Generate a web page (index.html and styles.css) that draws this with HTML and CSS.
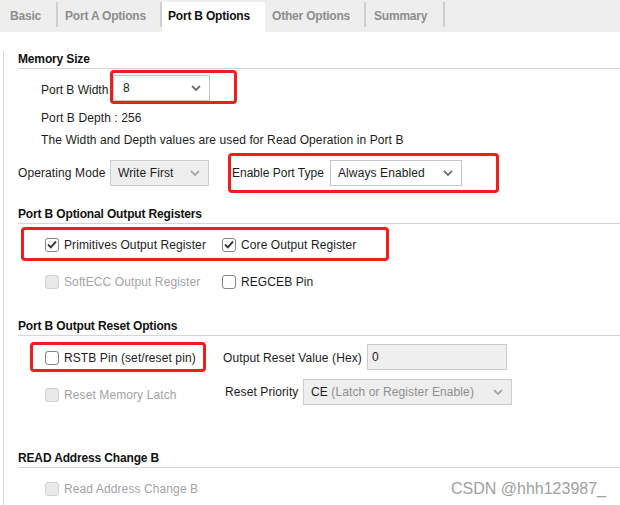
FILE: index.html
```html
<!DOCTYPE html>
<html>
<head>
<meta charset="utf-8">
<link rel="stylesheet" href="styles.css">
</head>
<body>
<div class="tabs">
  <div class="tab tab-basic">Basic</div>
  <div class="tab tab-a">Port A Options</div>
  <div class="tab tab-b active">Port B Options</div>
  <div class="tab tab-other">Other Options</div>
  <div class="tab tab-summary">Summary</div>
</div>
<div class="panel">
  <div class="heading h1">Memory Size</div>
  <div class="row row-width">
    <span class="label label-width">Port B Width</span>
    <div class="mark mark-width">
      <div class="select sel-width"><span>8</span><svg class="chev" width="10" height="6" viewBox="0 0 10 6"><path d="M1 1 L5 5 L9 1" fill="none" stroke="currentColor" stroke-width="1.8"/></svg></div>
    </div>
  </div>
  <div class="line indent depth">Port B Depth : 256</div>
  <div class="line indent note">The Width and Depth values are used for Read Operation in Port B</div>
  <div class="row row-op">
    <span class="label label-op">Operating Mode</span>
    <div class="select disabled sel-op"><span>Write First</span><svg class="chev" width="10" height="6" viewBox="0 0 10 6"><path d="M1 1 L5 5 L9 1" fill="none" stroke="currentColor" stroke-width="1.8"/></svg></div>
    <div class="mark mark-enable">
      <span class="label label-enable">Enable Port Type</span>
      <div class="select sel-enable"><span>Always Enabled</span><svg class="chev" width="10" height="6" viewBox="0 0 10 6"><path d="M1 1 L5 5 L9 1" fill="none" stroke="currentColor" stroke-width="1.8"/></svg></div>
    </div>
  </div>

  <div class="heading h2">Port B Optional Output Registers</div>
  <div class="mark mark-regs">
    <label class="check col1"><span class="box checked"><svg width="10" height="9" viewBox="0 0 10 9"><path d="M1 4.5 L3.8 7.3 L9 1.5" fill="none" stroke="currentColor" stroke-width="1.9"/></svg></span>Primitives Output Register</label>
    <label class="check"><span class="box checked"><svg width="10" height="9" viewBox="0 0 10 9"><path d="M1 4.5 L3.8 7.3 L9 1.5" fill="none" stroke="currentColor" stroke-width="1.9"/></svg></span>Core Output Register</label>
  </div>
  <div class="row row-ecc">
    <label class="check col1 off"><span class="box"></span>SoftECC Output Register</label>
    <label class="check"><span class="box"></span>REGCEB Pin</label>
  </div>

  <div class="heading h3">Port B Output Reset Options</div>
  <div class="row row-rstb">
    <div class="mark mark-rstb">
      <label class="check"><span class="box"></span>RSTB Pin (set/reset pin)</label>
    </div>
    <span class="label label-reset">Output Reset Value (Hex)</span>
    <div class="input">0</div>
  </div>
  <div class="row row-prio">
    <label class="check col-prio off"><span class="box"></span>Reset Memory Latch</label>
    <span class="label label-prio">Reset Priority</span>
    <div class="select disabled sel-prio"><span>CE <span class="muted">(Latch or Register Enable)</span></span><svg class="chev" width="10" height="6" viewBox="0 0 10 6"><path d="M1 1 L5 5 L9 1" fill="none" stroke="currentColor" stroke-width="1.8"/></svg></div>
  </div>

  <div class="heading h4">READ Address Change B</div>
  <div class="row row-read">
    <label class="check off"><span class="box"></span>Read Address Change B</label>
  </div>
</div>
<div class="watermark">CSDN @hhh123987_</div>
</body>
</html>
```
FILE: styles.css
```css
* { box-sizing: border-box; }
html, body { margin: 0; padding: 0; background: #fff; }
body {
  width: 620px;
  height: 505px;
  overflow: hidden;
  position: relative;
  font-family: "Liberation Sans", Arial, sans-serif;
  font-size: 12px;
  letter-spacing: 0.1px;
  color: #1c1c1c;
}

.tabs {
  display: flex;
  align-items: flex-start;
  height: 32px;
  padding-top: 2px;
  background: #eeeeee;
}
.tab {
  height: 25px;
  padding-top: 3px;
  line-height: 22px;
  padding-left: 7px;
  font-weight: bold;
  letter-spacing: -0.2px;
  color: #8d8d8d;
  border-right: 2px solid #cfcfcf;
  white-space: nowrap;
}
.tab-basic { width: 58px; padding-left: 10px; }
.tab-a { width: 104px; }
.tab-b { width: 103px; padding-left: 6px; }
.tab-other { width: 101px; }
.tab-summary { width: 79px; padding-left: 8px; }
.tab.active {
  height: 30px;
  background: #fff;
  color: #111;
  border-right: 0;
}

.panel {
  margin-left: 3px;
  border-left: 1px solid #dadada;
  padding-left: 14px;
  height: 473px;
}

.heading {
  font-weight: bold;
  letter-spacing: -0.15px;
  color: #111;
  line-height: 16px;
  padding-bottom: 1px;
  border-bottom: 1px solid #d4d4d4;
}
.h1 { margin-top: 19px; }
.h2 { margin-top: 13px; }
.h3 { margin-top: 26px; }
.h4 { margin-top: 45px; }

.row { display: flex; align-items: center; }
.label { white-space: nowrap; }
.line { line-height: 16px; white-space: nowrap; }
.indent { padding-left: 23px; }
.depth { margin-top: 6px; }
.note { margin-top: 6px; }

.mark {
  border: 3px solid #f01d1d;
  border-radius: 4px;
  display: flex;
  align-items: center;
}

.row-width { margin-top: 1px; padding-left: 23px; }
.label-width { width: 69px; padding-top: 6px; letter-spacing: 0; }
.mark-width { padding: 2px 24px 0 0; height: 34px; align-items: flex-start; }
.sel-width { width: 97px; }

.select {
  height: 26px;
  border: 1px solid #c6c6c6;
  background: #fff;
  display: flex;
  align-items: center;
  justify-content: space-between;
  padding: 0 8px 0 7px;
  white-space: nowrap;
  color: #1c1c1c;
}
.chev { color: #707070; flex: none; }
.select.disabled { background: #eeeeee; border-color: #cdcdcd; }
.select.disabled .chev { color: #a9a9a9; }
.sel-width { padding-left: 9px; }
.muted { color: #8e8e8e; }

.row-op { margin-top: 5px; height: 40px; }
.label-op { width: 92px; }
.sel-op { width: 99px; }
.mark-enable {
  margin-left: 19px;
  height: 40px;
  padding: 0 34px 0 1px;
}
.label-enable { width: 98px; letter-spacing: 0; }
.sel-enable { width: 132px; }

.check {
  display: flex;
  align-items: center;
  white-space: nowrap;
}
.box {
  width: 14px;
  height: 14px;
  border: 1px solid #858585;
  border-radius: 3px;
  background: #fff;
  margin-right: 5px;
  display: flex;
  align-items: center;
  justify-content: center;
  color: #3a3a3a;
  flex: none;
}
.check.off { color: #a3a3a3; }
.check.off .box { background: #e9e9e9; border-color: #d2d2d2; }

.mark-regs {
  margin-top: 3px;
  margin-left: 3px;
  width: 368px;
  height: 34px;
  padding-left: 21px;
  padding-top: 1px;
}
.col1 { width: 177px; }

.row-ecc { margin-top: 9px; height: 22px; padding-left: 27px; padding-top: 1px; }

.row-rstb { margin-top: 6px; height: 30px; }
.mark-rstb {
  margin-left: 12px;
  width: 176px;
  height: 30px;
  padding-left: 12px;
  padding-top: 1px;
}
.label-reset { margin-left: 17px; width: 144px; padding-top: 1px; }
.input {
  width: 140px;
  height: 26px;
  border: 1px solid #cbcbcb;
  background: #efefef;
  line-height: 24px;
  padding-left: 4px;
}

.row-prio { margin-top: 7px; height: 26px; padding-left: 27px; }
.col-prio { width: 180px; padding-top: 5px; }
.label-prio { width: 78px; }
.sel-prio { width: 209px; }

.row-read { margin-top: 10px; height: 22px; padding-left: 27px; }

.watermark {
  position: absolute;
  right: 14px;
  top: 479px;
  font-size: 16px;
  letter-spacing: 0;
  color: #a0a0a0;
  line-height: 20px;
  white-space: nowrap;
}
```
